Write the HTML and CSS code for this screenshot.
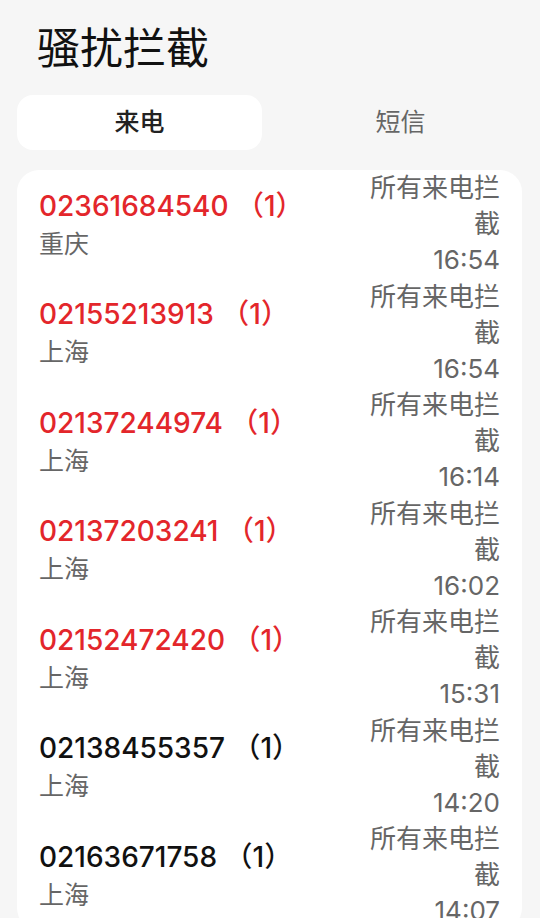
FILE: index.html
```html
<!DOCTYPE html>
<html lang="zh-CN">
<head>
    <meta charset="UTF-8">
    <meta name="viewport" content="width=device-width, initial-scale=1.0">
    <title>骚扰拦截</title>
    <link rel="stylesheet" href="styles.css">
</head>
<body>
    <div class="page">
        <h1 class="page-title">骚扰拦截</h1>
        <div class="tabs">
            <div class="tab active">来电</div>
            <div class="tab">短信</div>
        </div>
        <div class="call-list">
            <div class="call-item missed">
                <div class="call-info">
                    <div class="call-number">02361684540 （1）</div>
                    <div class="call-area">重庆</div>
                </div>
                <div class="call-meta">所有来电拦截<br><span class="call-time">16:54</span></div>
            </div>
            <div class="call-item missed">
                <div class="call-info">
                    <div class="call-number">02155213913 （1）</div>
                    <div class="call-area">上海</div>
                </div>
                <div class="call-meta">所有来电拦截<br><span class="call-time">16:54</span></div>
            </div>
            <div class="call-item missed">
                <div class="call-info">
                    <div class="call-number">02137244974 （1）</div>
                    <div class="call-area">上海</div>
                </div>
                <div class="call-meta">所有来电拦截<br><span class="call-time">16:14</span></div>
            </div>
            <div class="call-item missed">
                <div class="call-info">
                    <div class="call-number">02137203241 （1）</div>
                    <div class="call-area">上海</div>
                </div>
                <div class="call-meta">所有来电拦截<br><span class="call-time">16:02</span></div>
            </div>
            <div class="call-item missed">
                <div class="call-info">
                    <div class="call-number">02152472420 （1）</div>
                    <div class="call-area">上海</div>
                </div>
                <div class="call-meta">所有来电拦截<br><span class="call-time">15:31</span></div>
            </div>
            <div class="call-item">
                <div class="call-info">
                    <div class="call-number">02138455357 （1）</div>
                    <div class="call-area">上海</div>
                </div>
                <div class="call-meta">所有来电拦截<br><span class="call-time">14:20</span></div>
            </div>
            <div class="call-item">
                <div class="call-info">
                    <div class="call-number">02163671758 （1）</div>
                    <div class="call-area">上海</div>
                </div>
                <div class="call-meta">所有来电拦截<br><span class="call-time">14:07</span></div>
            </div>
        </div>
    </div>
</body>
</html>
```

FILE: styles.css
```css
body,div,h1 {
    margin: 0;
    padding: 0;
}
body {
    background: #f6f6f6;
    font-family: Inter, "Noto Sans CJK SC", sans-serif;
    color: #111;
}
.page {
    width: 100%;
    padding-top: 18px;
    box-sizing: border-box;
}
.page-title {
    font-size: 43px;
    font-weight: 400;
    line-height: 60px;
    padding-left: 37px;
    color: #111;
}
/* 标签切换 */
.tabs {
    display: flex;
    gap: 16px;
    margin: 17px 17px 0 17px;
}
.tab {
    flex: 1;
    height: 55px;
    line-height: 55px;
    text-align: center;
    font-size: 25px;
    color: #666;
    border-radius: 16px;
}
.tab.active {
    background: #fff;
    color: #222;
    font-weight: 500;
}
/* 拦截记录 */
.call-list {
    margin: 20px 18px 0 17px;
    padding: 0 22px 0 22px;
    background: #fff;
    border-radius: 22px;
}
.call-item {
    display: flex;
    align-items: center;
    justify-content: space-between;
}
.call-number {
    font-size: 28px;
    font-weight: 500;
    line-height: 40px;
    color: #111;
}
.call-item.missed .call-number {
    color: #e3262b;
}
.call-area {
    font-size: 25px;
    line-height: 37px;
    color: #666;
}
.call-meta {
    width: 134px;
    text-align: right;
    font-size: 26px;
    line-height: 36.17px;
    color: #666;
}
```
